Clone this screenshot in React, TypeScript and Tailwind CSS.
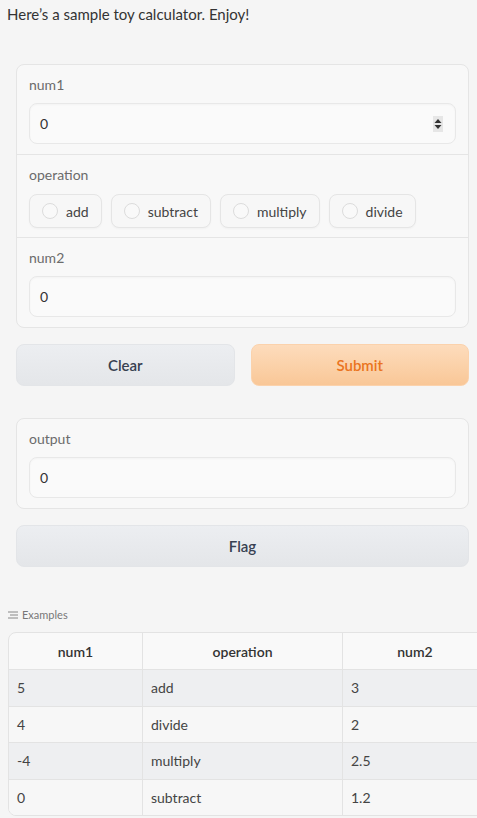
import { useState } from "react";

const OPERATIONS = ["add", "subtract", "multiply", "divide"];

const EXAMPLES = [
  { num1: "5", operation: "add", num2: "3" },
  { num1: "4", operation: "divide", num2: "2" },
  { num1: "-4", operation: "multiply", num2: "2.5" },
  { num1: "0", operation: "subtract", num2: "1.2" },
];

function Field({ label, value, spinner }: { label: string; value: string; spinner?: boolean }) {
  return (
    <div className="px-3 pt-[10px] pb-[10px]">
      <p className="text-[14px] leading-[20px] text-[#6b6b6b] mb-[8px]">{label}</p>
      <div className="flex items-center h-[41px] rounded-lg border border-[#e8e8e8] bg-[#fafafa] px-[10px] shadow-[inset_0_1px_2px_rgba(0,0,0,0.03)]">
        <span className="flex-1 text-[14px] text-[#333]">{value}</span>
        {spinner && (
          <svg width="10" height="16" viewBox="0 0 10 16" className="mr-[2px]">
            <rect x="0" y="0" width="10" height="16" fill="#e6e6e6" />
            <path d="M1.5 7 L5 3 L8.5 7 Z" fill="#333" />
            <path d="M1.5 9 L5 13 L8.5 9 Z" fill="#333" />
          </svg>
        )}
      </div>
    </div>
  );
}

export default function App() {
  const [op, setOp] = useState<string | null>(null);

  return (
    <div className="min-h-[818px] bg-[#f5f5f5] text-[#333] font-['Lato','Noto_Sans',sans-serif] overflow-hidden">
      <p className="px-[7px] pt-[3px] text-[15px] leading-[22px] text-[#333]">Here’s a sample toy calculator. Enjoy!</p>

      <div className="pl-4 pr-2 pt-[39px]">
        {/* Inputs */}
        <div className="rounded-lg border border-[#e5e5e5] bg-[#f8f8f8]">
          <Field label="num1" value="0" spinner />
          <div className="border-t border-[#e5e5e5] px-3 pt-[10px] pb-[9px]">
            <p className="text-[14px] leading-[20px] text-[#6b6b6b] mb-[9px]">operation</p>
            <div className="flex gap-[9px]">
              {OPERATIONS.map((o) => (
                <label
                  key={o}
                  onClick={() => setOp(o)}
                  className="flex items-center gap-[8px] h-[34px] rounded-lg border border-[#e5e5e5] bg-[#f7f7f7] pl-[12px] pr-[12px] text-[14px] text-[#444] shadow-[0_1px_2px_rgba(0,0,0,0.03)] cursor-pointer"
                >
                  <span
                    className={
                      op === o
                        ? "w-[16px] h-[16px] rounded-full border-[5px] border-[#f97316] bg-white"
                        : "w-[16px] h-[16px] rounded-full border border-[#dcdcdc] bg-[#f9f9f9]"
                    }
                  />
                  {o}
                </label>
              ))}
            </div>
          </div>
          <div className="border-t border-[#e5e5e5]">
            <Field label="num2" value="0" />
          </div>
        </div>

        {/* Buttons */}
        <div className="flex gap-4 mt-[16px]">
          <button className="flex-1 h-[42px] rounded-lg border border-[#e3e5e8] bg-gradient-to-b from-[#eceef1] to-[#e4e6e9] text-[15px] font-semibold text-[#374151]">
            Clear
          </button>
          <button className="flex-1 h-[42px] rounded-lg border border-[#fbd2ac] bg-gradient-to-b from-[#fddcbc] to-[#f9c797] text-[15px] font-semibold text-[#ea7420]">
            Submit
          </button>
        </div>

        {/* Output */}
        <div className="mt-[32px] rounded-lg border border-[#e5e5e5] bg-[#f8f8f8]">
          <Field label="output" value="0" />
        </div>

        <button className="mt-[16px] w-full h-[42px] rounded-lg border border-[#e3e5e8] bg-gradient-to-b from-[#eceef1] to-[#e4e6e9] text-[15px] font-semibold text-[#374151]">
          Flag
        </button>
      </div>

      {/* Examples */}
      <div className="pl-[8px] mt-[40px]">
        <div className="flex items-center gap-[4px] text-[11px] leading-[16px] text-[#777]">
          <svg width="10" height="10" viewBox="0 0 10 10" stroke="#888" strokeWidth="1">
            <path d="M0 2 H10 M2 5 H10 M0 8 H10" />
          </svg>
          Examples
        </div>
        <div className="mt-[9px] w-[480px] rounded-l-lg border border-[#e3e3e3] overflow-hidden bg-[#f9f9f9]">
          <div className="grid grid-cols-[134px_200px_1fr] h-[36px] text-[14px] font-semibold text-[#333]">
            <div className="flex items-center justify-center border-r border-[#e3e3e3]">num1</div>
            <div className="flex items-center justify-center border-r border-[#e3e3e3]">operation</div>
            <div className="flex items-center justify-center">num2</div>
          </div>
          {EXAMPLES.map((r, i) => (
            <div
              key={i}
              className={
                i % 2 === 0
                  ? "grid grid-cols-[134px_200px_1fr] h-[36.5px] border-t border-[#e3e3e3] bg-[#eeeff1] text-[14px] text-[#444]"
                  : "grid grid-cols-[134px_200px_1fr] h-[36.5px] border-t border-[#e3e3e3] bg-[#f7f7f7] text-[14px] text-[#444]"
              }
            >
              <div className="flex items-center px-[8px] border-r border-[#e3e3e3]">{r.num1}</div>
              <div className="flex items-center px-[8px] border-r border-[#e3e3e3]">{r.operation}</div>
              <div className="flex items-center px-[8px]">{r.num2}</div>
            </div>
          ))}
        </div>
      </div>
    </div>
  );
}
